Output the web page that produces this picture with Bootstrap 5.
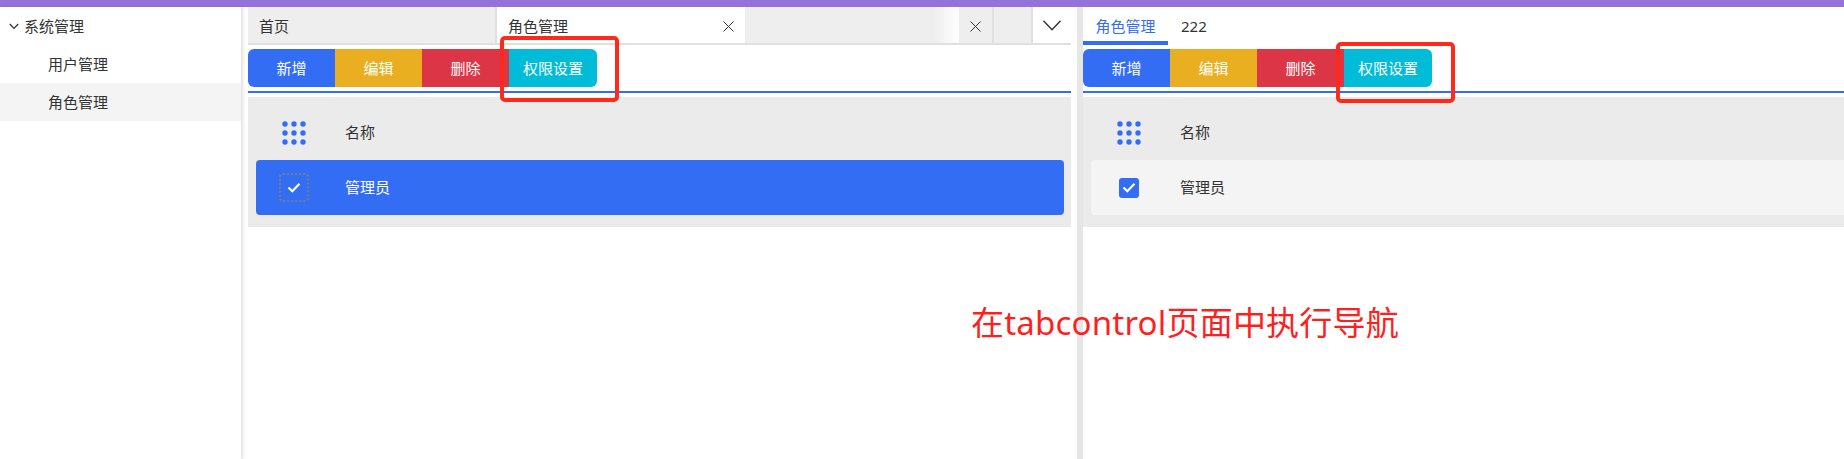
<!DOCTYPE html>
<html lang="zh-CN">
<head>
    <meta charset="UTF-8">
    <meta name="viewport" content="width=device-width, initial-scale=1.0">
    <title>角色管理</title>
    <link href="https://cdn.jsdelivr.net/npm/bootstrap@5.3.0/dist/css/bootstrap.min.css" rel="stylesheet">
    <style>
        body {
            margin: 0;
            height: 459px;
            overflow: hidden;
            background: #fff;
            color: #333;
            font-family: "Noto Sans", "Noto Sans CJK SC", sans-serif;
            font-size: 15px;
        }

        .top-strip {
            height: 7px;
            background: #9571db;
        }

        .app-body {
            height: 452px;
            position: relative;
        }

        /* left tree */
        .side-tree {
            width: 241px;
            flex: none;
            box-shadow: 2px 0 3px rgba(0, 0, 0, .12);
        }

        .tree-head {
            height: 38px;
            padding-left: 9px;
            gap: 5px;
        }

        .tree-item {
            height: 38px;
            padding-left: 48px;
        }

        .tree-item.is-current {
            background: #f4f4f4;
        }

        /* panes */
        .pane-left {
            width: 823px;
            flex: none;
            margin-left: 7px;
        }

        .pane-split {
            width: 6px;
            flex: none;
            margin-left: 6px;
            background: #e6e6e6;
        }

        .pane-right {
            min-width: 0;
        }

        /* tab strips */
        .tab-strip {
            height: 38px;
            border-bottom: 2px solid #e0e0e0;
        }

        .tab-cell {
            height: 36px;
            padding-top: 2px;
            background: #eee;
            border-right: 2px solid #e0e0e0;
        }

        .tab-home {
            width: 249px;
            padding-left: 11px;
        }

        .tab-active {
            width: 248px;
            padding-left: 11px;
            padding-right: 11px;
            background: #fff;
            border-right: 0;
        }

        .tab-fade {
            width: 214px;
            border-right: 0;
            background: linear-gradient(to right, #eee 0, #eee 88%, #fff 100%);
        }

        .tab-close {
            width: 35px;
        }

        .tab-blank {
            width: 39px;
        }

        .tab-more {
            width: 38px;
            padding-top: 0;
            background: #fff;
            border-right: 0;
        }

        .plain-tabs {
            height: 38px;
        }

        .plain-tab {
            height: 38px;
            color: #333;
            text-decoration: none;
        }

        .plain-tab.is-on {
            width: 85px;
            color: #336df4;
            border-bottom: 4px solid #336df4;
            padding-top: 4px;
        }

        .plain-tab.is-other {
            margin-left: 13px;
        }

        /* toolbar */
        .tool-row {
            --bs-border-width: 0px;
            margin-top: 4px;
            height: 38px;
        }

        .tool-row .btn {
            height: 38px;
            padding: 0;
            border: 0;
            color: #fff;
            font-size: 15px;
            font-family: inherit;
            line-height: 38px;
            flex: none;
        }

        .btn-wide {
            width: 87px;
        }

        .btn-wider {
            width: 88px;
        }

        .tool-add {
            background: #336df4;
        }

        .tool-edit {
            background: #e9af20;
        }

        .tool-del {
            background: #dc3545;
        }

        .tool-perm {
            background: #00bcd9;
        }

        .tool-line {
            height: 2px;
            margin-top: 4px;
            background: #336df4;
        }

        /* data grid */
        .role-grid {
            margin-top: 4px;
            height: 130px;
            background: #ebebeb;
        }

        .role-head,
        .role-line {
            display: grid;
            grid-template-columns: 76px 1fr;
            column-gap: 13px;
            align-items: center;
        }

        .role-head {
            height: 63px;
            padding: 8px 0 0 8px;
        }

        .role-line {
            height: 55px;
            margin-left: 8px;
            border-radius: 4px;
            background: #f4f4f4;
        }

        .pane-left .role-line {
            margin-right: 7px;
            background: #336df4;
            color: #fff;
        }

        .pane-right .role-line {
            border-radius: 4px 0 0 4px;
        }

        .grid-icon {
            justify-self: center;
        }

        .check-focus {
            width: 30px;
            height: 29px;
            border: 2px dotted #737c96;
            border-radius: 4px;
            justify-self: center;
        }

        .check-on {
            width: 20px;
            height: 20px;
            background: #336df4;
            border-radius: 3px;
            justify-self: center;
        }

        /* annotations on top of the shot */
        .mark-box {
            position: absolute;
            border: 4px solid #ff2a1a;
            border-radius: 5px;
        }

        .mark-left {
            left: 500px;
            top: 29px;
            width: 119px;
            height: 66px;
        }

        .mark-right {
            left: 1336px;
            top: 35px;
            width: 119px;
            height: 61px;
        }

        .mark-note {
            position: absolute;
            left: 971px;
            top: 293px;
            color: #ff1f1f;
            font-size: 33px;
            letter-spacing: .2px;
            line-height: 46px;
            white-space: nowrap;
        }
    </style>
</head>
<body>

    <div class="top-strip"></div>

    <div class="app-body d-flex">

        <div class="side-tree">
            <div class="tree-head d-flex align-items-center">
                <svg width="10" height="7" viewBox="0 0 10 7"><path d="M.8 1l4.2 4.4L9.2 1" fill="none" stroke="#333" stroke-width="1.3"/></svg>
                <span>系统管理</span>
            </div>
            <div class="tree-item d-flex align-items-center">用户管理</div>
            <div class="tree-item is-current d-flex align-items-center">角色管理</div>
        </div>

        <div class="pane-left">
            <div class="tab-strip d-flex">
                <div class="tab-cell tab-home d-flex align-items-center">首页</div>
                <div class="tab-cell tab-active d-flex align-items-center justify-content-between">
                    <span>角色管理</span>
                    <svg width="11" height="11" viewBox="0 0 11 11"><path d="M.5.5l10 10M10.5.5l-10 10" stroke="#333" stroke-width="1"/></svg>
                </div>
                <div class="tab-cell tab-fade"></div>
                <div class="tab-cell tab-close d-flex align-items-center justify-content-center">
                    <svg width="11" height="11" viewBox="0 0 11 11"><path d="M.5.5l10 10M10.5.5l-10 10" stroke="#333" stroke-width="1"/></svg>
                </div>
                <div class="tab-cell tab-blank"></div>
                <div class="tab-cell tab-more d-flex align-items-center justify-content-center">
                    <svg width="18" height="11" viewBox="0 0 18 11"><path d="M.5.7L9 9.7 17.500.7" fill="none" stroke="#333" stroke-width="1.400"/></svg>
                </div>
            </div>

            <div class="tool-row btn-group d-flex justify-content-start">
                <button type="button" class="btn btn-wide tool-add">新增</button>
                <button type="button" class="btn btn-wide tool-edit">编辑</button>
                <button type="button" class="btn btn-wide tool-del">删除</button>
                <button type="button" class="btn btn-wider tool-perm">权限设置</button>
            </div>
            <div class="tool-line"></div>

            <div class="role-grid">
                <div class="role-head">
                    <svg class="grid-icon" width="24" height="24" viewBox="0 0 24 24" fill="#336df4">
                        <circle cx="3" cy="3" r="2.700"/><circle cx="12" cy="3" r="2.700"/><circle cx="21" cy="3" r="2.700"/>
                        <circle cx="3" cy="12" r="2.700"/><circle cx="12" cy="12" r="2.700"/><circle cx="21" cy="12" r="2.700"/>
                        <circle cx="3" cy="21" r="2.700"/><circle cx="12" cy="21" r="2.700"/><circle cx="21" cy="21" r="2.700"/>
                    </svg>
                    <span>名称</span>
                </div>
                <div class="role-line">
                    <span class="check-focus d-flex align-items-center justify-content-center">
                        <svg width="14" height="11" viewBox="0 0 14 11"><path d="M1.500 5.500l3.800 3.700L12.500 1.800" fill="none" stroke="#fff" stroke-width="2.200"/></svg>
                    </span>
                    <span>管理员</span>
                </div>
            </div>
        </div>

        <div class="pane-split"></div>

        <div class="pane-right flex-grow-1">
            <div class="plain-tabs d-flex">
                <a href="#" class="plain-tab is-on d-flex align-items-center justify-content-center">角色管理</a>
                <a href="#" class="plain-tab is-other d-flex align-items-center">222</a>
            </div>

            <div class="tool-row btn-group d-flex justify-content-start">
                <button type="button" class="btn btn-wide tool-add">新增</button>
                <button type="button" class="btn btn-wide tool-edit">编辑</button>
                <button type="button" class="btn btn-wide tool-del">删除</button>
                <button type="button" class="btn btn-wider tool-perm">权限设置</button>
            </div>
            <div class="tool-line"></div>

            <div class="role-grid">
                <div class="role-head">
                    <svg class="grid-icon" width="24" height="24" viewBox="0 0 24 24" fill="#336df4">
                        <circle cx="3" cy="3" r="2.700"/><circle cx="12" cy="3" r="2.700"/><circle cx="21" cy="3" r="2.700"/>
                        <circle cx="3" cy="12" r="2.700"/><circle cx="12" cy="12" r="2.700"/><circle cx="21" cy="12" r="2.700"/>
                        <circle cx="3" cy="21" r="2.700"/><circle cx="12" cy="21" r="2.700"/><circle cx="21" cy="21" r="2.700"/>
                    </svg>
                    <span>名称</span>
                </div>
                <div class="role-line">
                    <span class="check-on d-flex align-items-center justify-content-center">
                        <svg width="14" height="11" viewBox="0 0 14 11"><path d="M1.500 5.500l3.800 3.700L12.500 1.800" fill="none" stroke="#fff" stroke-width="2.200"/></svg>
                    </span>
                    <span>管理员</span>
                </div>
            </div>
        </div>

        <div class="mark-box mark-left"></div>
        <div class="mark-box mark-right"></div>
        <div class="mark-note">在tabcontrol页面中执行导航</div>
    </div>

    <script src="https://cdn.jsdelivr.net/npm/bootstrap@5.3.0/dist/js/bootstrap.bundle.min.js"></script>
</body>
</html>
